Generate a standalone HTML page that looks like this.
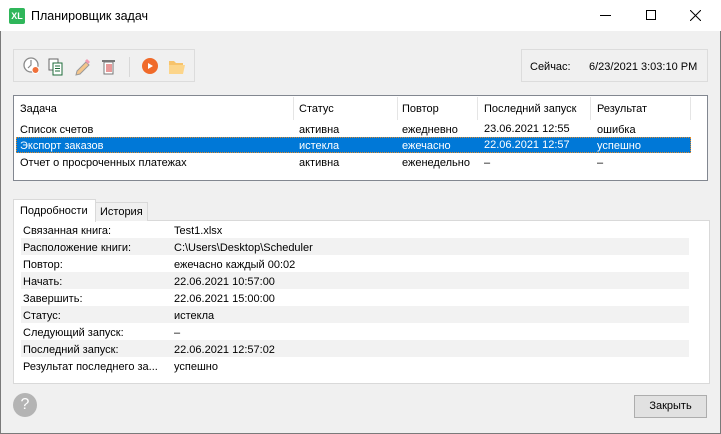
<!DOCTYPE html>
<html><head><meta charset="utf-8"><style>
*{margin:0;padding:0;box-sizing:border-box}
body{width:721px;height:434px;background:#f0f0f0;font-family:"Liberation Sans",sans-serif;font-size:11px;color:#000;position:relative;overflow:hidden}
.abs{position:absolute}
.win{position:absolute;left:0;top:0;width:721px;height:434px;border:1px solid #7a7a7a;border-top:none}
.title{position:absolute;left:0;top:0;width:721px;height:31px;background:#fff}
.t{position:absolute;white-space:nowrap;line-height:14px}
</style></head><body>
<div class="win"></div>
<div class="title">
 <div class="abs" style="left:9px;top:8px;width:16px;height:16px;background:#2fb65a;border-radius:2px;color:#fff;font-size:9px;font-weight:bold;line-height:16px;text-align:center">XL</div>
 <div class="t" style="left:31px;top:9px;font-size:12.5px">Планировщик задач</div>
 <div class="abs" style="left:600px;top:15px;width:11px;height:1px;background:#000"></div>
 <div class="abs" style="left:646px;top:10px;width:10px;height:10px;border:1px solid #000"></div>
 <svg class="abs" style="left:690px;top:10px" width="11" height="11"><path d="M0 0L11 11M11 0L0 11" stroke="#000" stroke-width="1"/></svg>
</div>
<div class="abs" style="left:13px;top:49px;width:182px;height:33px;border:1px solid #dcdcdc"></div>
<svg class="abs" style="left:22px;top:56px" width="180" height="22">
 <circle cx="9" cy="9" r="7" fill="#fff" stroke="#8a8a8a" stroke-width="1.3"/><path d="M9 4V9L6 12" stroke="#8a8a8a" fill="none" stroke-width="1.2"/>
 <circle cx="13.5" cy="14" r="3.5" fill="#f0703a" stroke="#fff" stroke-width="1"/>
 <rect x="27" y="3" width="9" height="11" fill="#fff" stroke="#666"/><rect x="31" y="7" width="9" height="12" fill="#fff" stroke="#1e6b3a"/>
 <path d="M33 10h5M33 12.5h5M33 15h5" stroke="#1e6b3a"/>
 <path d="M54 19l1-4 9-9 3 3-9 9z" fill="#f5c58a" stroke="#999"/><path d="M63 5l2-2 3 3-2 2z" fill="#f29ab0"/>
 <rect x="82" y="6" width="9" height="12" fill="#fff" stroke="#777"/><rect x="80" y="4" width="13" height="2" fill="#777"/>
 <path d="M85 8v8M87 8v8M89 8v8" stroke="#d03030"/>
 <line x1="107.5" y1="1" x2="107.5" y2="21" stroke="#d8d8d8"/>
 <circle cx="128" cy="10" r="8" fill="#f06a2a"/><path d="M126 7v6l5-3z" fill="#fff"/>
 <path d="M147 5h5l2 2h7v11h-14z" fill="#f7c36b"/><path d="M147 9h16l-2 9h-14z" fill="#fcd58a"/>
</svg>
<div class="abs" style="left:521px;top:49px;width:187px;height:33px;border:1px solid #dcdcdc"></div>
<div class="t" style="left:530px;top:60px">Сейчас:</div>
<div class="t" style="left:589px;top:60px">6/23/2021 3:03:10 PM</div>
<div class="abs" style="left:13px;top:95px;width:695px;height:86px;border:1px solid #828790;background:#fff"></div>
<div class="abs" style="left:293px;top:97px;width:1px;height:23px;background:#e5e5e5"></div>
<div class="abs" style="left:397px;top:97px;width:1px;height:23px;background:#e5e5e5"></div>
<div class="abs" style="left:477px;top:97px;width:1px;height:23px;background:#e5e5e5"></div>
<div class="abs" style="left:590px;top:97px;width:1px;height:23px;background:#e5e5e5"></div>
<div class="abs" style="left:690px;top:97px;width:1px;height:23px;background:#e5e5e5"></div>
<div class="t" style="left:20px;top:102px">Задача</div>
<div class="t" style="left:299px;top:102px">Статус</div>
<div class="t" style="left:402px;top:102px">Повтор</div>
<div class="t" style="left:484px;top:102px">Последний запуск</div>
<div class="t" style="left:597px;top:102px">Результат</div>
<div class="t" style="left:20px;top:123px">Список счетов</div>
<div class="t" style="left:299px;top:123px">активна</div>
<div class="t" style="left:402px;top:123px">ежедневно</div>
<div class="t" style="left:484px;top:122px">23.06.2021 12:55</div>
<div class="t" style="left:597px;top:123px">ошибка</div>
<div class="abs" style="left:16px;top:137px;width:675px;height:16px;background:#0078d7;border:1px dotted #e08a2a"></div>
<div class="t" style="left:20px;top:139px;color:#fff">Экспорт заказов</div>
<div class="t" style="left:299px;top:139px;color:#fff">истекла</div>
<div class="t" style="left:402px;top:139px;color:#fff">ежечасно</div>
<div class="t" style="left:484px;top:138px;color:#fff">22.06.2021 12:57</div>
<div class="t" style="left:597px;top:139px;color:#fff">успешно</div>
<div class="t" style="left:20px;top:156px">Отчет о просроченных платежах</div>
<div class="t" style="left:299px;top:156px">активна</div>
<div class="t" style="left:402px;top:156px">еженедельно</div>
<div class="t" style="left:484px;top:156px">–</div>
<div class="t" style="left:597px;top:156px">–</div>
<div class="abs" style="left:13px;top:220px;width:697px;height:164px;border:1px solid #d9d9d9;background:#fff"></div>
<div class="abs" style="left:95px;top:202px;width:53px;height:19px;border:1px solid #d9d9d9;border-bottom:none;background:#f0f0f0"></div>
<div class="abs" style="left:13px;top:199px;width:83px;height:23px;border:1px solid #d9d9d9;border-bottom:none;background:#fff"></div>
<div class="t" style="left:20px;top:204px">Подробности</div>
<div class="t" style="left:100px;top:205px">История</div>
<div class="abs" style="left:21px;top:238px;width:668px;height:17px;background:#f2f2f2"></div>
<div class="abs" style="left:21px;top:272px;width:668px;height:17px;background:#f2f2f2"></div>
<div class="abs" style="left:21px;top:306px;width:668px;height:17px;background:#f2f2f2"></div>
<div class="abs" style="left:21px;top:340px;width:668px;height:17px;background:#f2f2f2"></div>
<div class="t" style="left:23px;top:224px">Связанная книга:</div><div class="t" style="left:174px;top:224px">Test1.xlsx</div>
<div class="t" style="left:23px;top:241px">Расположение книги:</div><div class="t" style="left:174px;top:241px">C:\Users\Desktop\Scheduler</div>
<div class="t" style="left:23px;top:258px">Повтор:</div><div class="t" style="left:174px;top:258px">ежечасно каждый 00:02</div>
<div class="t" style="left:23px;top:275px">Начать:</div><div class="t" style="left:174px;top:275px">22.06.2021 10:57:00</div>
<div class="t" style="left:23px;top:292px">Завершить:</div><div class="t" style="left:174px;top:292px">22.06.2021 15:00:00</div>
<div class="t" style="left:23px;top:309px">Статус:</div><div class="t" style="left:174px;top:309px">истекла</div>
<div class="t" style="left:23px;top:326px">Следующий запуск:</div><div class="t" style="left:174px;top:326px">–</div>
<div class="t" style="left:23px;top:343px">Последний запуск:</div><div class="t" style="left:174px;top:343px">22.06.2021 12:57:02</div>
<div class="t" style="left:23px;top:360px">Результат последнего за...</div><div class="t" style="left:174px;top:360px">успешно</div>
<div class="abs" style="left:13px;top:393px;width:24px;height:24px;border-radius:50%;background:#b4b4b4;color:#fff;font-size:16px;line-height:24px;text-align:center">?</div>
<div class="abs" style="left:634px;top:395px;width:73px;height:23px;border:1px solid #adadad;background:#e1e1e1;text-align:center;line-height:21px">Закрыть</div>
</body></html>
